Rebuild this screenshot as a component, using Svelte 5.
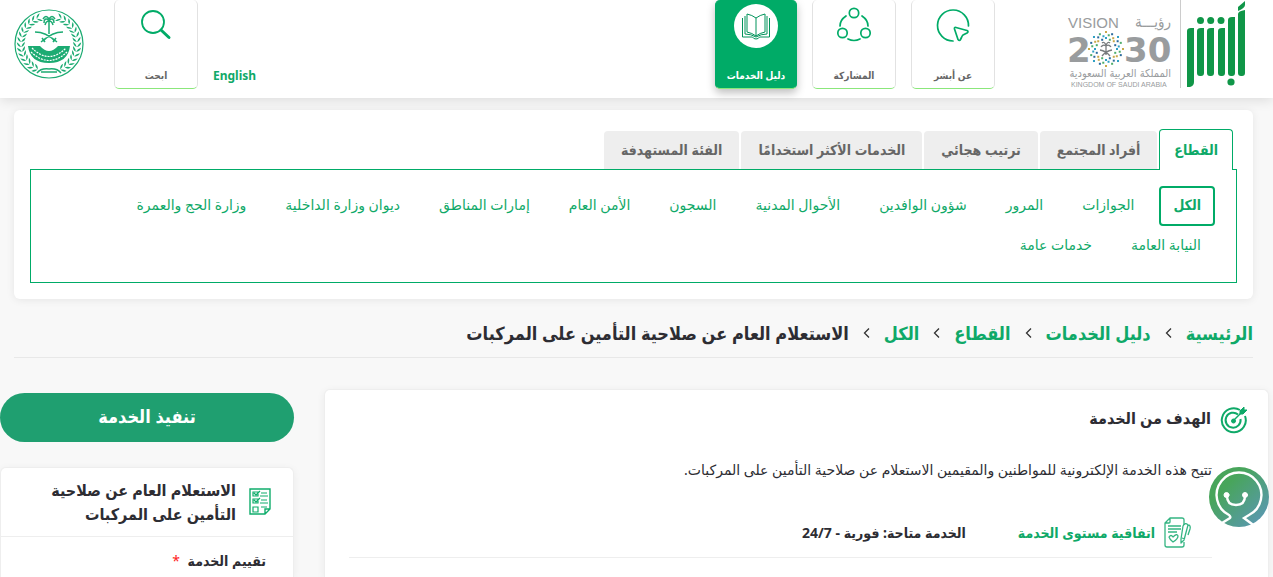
<script>
  const tabs = ['القطاع', 'أفراد المجتمع', 'ترتيب هجائي', 'الخدمات الأكثر استخدامًا', 'الفئة المستهدفة'];
  const sectors = [
    'الكل', 'الجوازات', 'المرور', 'شؤون الوافدين', 'الأحوال المدنية', 'السجون', 'الأمن العام',
    'إمارات المناطق', 'ديوان وزارة الداخلية', 'وزارة الحج والعمرة', 'النيابة العامة', 'خدمات عامة'
  ];
  const crumbs = ['الرئيسية', 'دليل الخدمات', 'القطاع', 'الكل'];
  const service = 'الاستعلام العام عن صلاحية التأمين على المركبات';
  let activeTab = $state(0);
  let activeSector = $state(0);

  // Leaves of one wreath branch, placed along an arc around the emblem's centre.
  const leaves = Array.from({ length: 14 }, (_, i) => {
    const deg = 66 - i * 10;
    const a = (deg * Math.PI) / 180;
    return { x: 35 + 28 * Math.cos(a), y: 35 - 28 * Math.sin(a), r: -deg };
  });

  // Dots of the snowflake-like rosette in the Vision mark.
  const colours = ['#2f9fc4', '#4fae6a', '#c9a94a', '#2b6a9c'];
  const dots = [10, 13, 16].flatMap((radius, ring) =>
    Array.from({ length: 16 }, (_, i) => {
      const a = ((i + (ring % 2) / 2) * Math.PI) / 8;
      const d = radius + (i % 2 ? 0 : 1);
      return { x: 39 + d * Math.cos(a), y: 39 + d * Math.sin(a), c: colours[(i + ring) % 4] };
    })
  );
</script>

<div class="page" dir="rtl" lang="ar">
  <header>
    <a class="logo absher" href="#home" aria-label="أبشر">
      <svg width="60" height="88" viewBox="0 0 60 88" fill="#109648">
        <path d="M2 31q0-3 4-3h3v54q0 4-4 5H2zM12 31q0-3 4-3h3v45q0 3-3 3h-1q-3 0-3-3zM22 31q0-3 4-3h3v45q0 3-3 3h-1q-3 0-3-3zM33 31q0-3 4-3h3v45q0 3-3 3h-1q-3 0-3-3zM43 20q0-3 4-3h3v56q0 3-3 3h-1q-3 0-3-3zM53 14q0-3 7-4v63q0 3-3 3h-1q-3 0-3-3z" />
        <path d="M53 11V7l7-6v4q0 3-7 6z" />
        <circle cx="15.500" cy="20.500" r="3.500" /><circle cx="25.700" cy="20.500" r="3.500" /><circle cx="36" cy="20.500" r="3.500" />
        <circle cx="46" cy="82" r="3.600" />
      </svg>
    </a>
    <a class="logo vision" href="#vision" aria-label="VISION 2030">
      <svg width="108" height="80" viewBox="0 0 108 80" fill="#999c9e" direction="ltr">
        <text x="1" y="18" font-size="15">VISION</text>
        <text class="ar" x="104" y="17" font-size="15" direction="rtl">رؤيـــة</text>
        <text class="num" x="0" y="52" font-size="34">2</text>
        <text class="num" x="57" y="52" font-size="34">30</text>
        {#each dots as d}<rect x={d.x - 1} y={d.y - 1} width="2" height="2" fill={d.c} />{/each}
        <path d="M39 45v-9M39 36q-3-2-5 1M39 36q3-2 5 1M39 35q-2-4-4-2M39 35q2-4 4-2M33 40q6 1 10 6M45 40q-6 1-10 6" fill="none" stroke="#777b7d" stroke-width="1.300" />
        <text class="ar" x="104" y="67" font-size="11" direction="rtl">المملكة العربية السعودية</text>
        <text x="4" y="77" font-size="7">KINGDOM OF SAUDI ARABIA</text>
      </svg>
    </a>
    <nav class="tiles" aria-label="القائمة الرئيسية">
      <a class="tile" href="#about">
        <svg width="40" height="40" viewBox="0 0 40 40" fill="none" stroke="#00ab67" stroke-width="1.700" stroke-linecap="round" stroke-linejoin="round">
          <path d="M20 36A15.500 15.500 0 1 1 35.500 21" />
          <path d="M21.500 24q-.5-2 1.500-1.500l11 3q2 1 0 2.500l-4 2q-1 1-1.500 2.500l-1 2q-1 2-2.500 0z" />
        </svg>
        <span>عن أبشر</span>
      </a>
      <a class="tile" href="#participate">
        <svg width="40" height="40" viewBox="0 0 40 40" fill="none" stroke="#00ab67" stroke-width="1.700" stroke-linecap="round">
          <circle cx="20" cy="8" r="4.700" /><circle cx="8.500" cy="28" r="4.700" /><circle cx="31.500" cy="28" r="4.700" />
          <path d="M12 11q-6 4-6 10M28 11q6 4 6 10M14 34q6 3 12 0" />
        </svg>
        <span>المشاركة</span>
      </a>
      <a class="tile current" href="#directory" aria-current="page">
        <svg width="44" height="44" viewBox="0 0 44 44" fill="none" stroke="#00935a" stroke-width="1">
          <circle cx="22" cy="22" r="22" fill="#fff" stroke="none" />
          <path d="M22 14q-4-3-9-4v18q5 1 9 4 4-3 9-4V10q-5 1-9 4zM22 14v18M11 12v18q6 0 11 3 5-3 11-3V12M8.500 14v19h10q1 2 3.500 2t3.500-2h10V14" />
        </svg>
        <span>دليل الخدمات</span>
      </a>
    </nav>
    <div class="tools">
      <a class="lang" href="#en" lang="en">English</a>
      <button class="tile" type="button">
        <svg width="40" height="40" viewBox="0 0 40 40" fill="none" stroke="#00ab67" stroke-linecap="round">
          <circle cx="17" cy="17" r="11" stroke-width="1.800" />
          <path d="M25 25l8 7.500" stroke-width="3" />
        </svg>
        <span>ابحث</span>
      </button>
      <a class="emblem" href="#moi" aria-label="وزارة الداخلية">
        <svg width="70" height="70" viewBox="0 0 70 70" fill="none" stroke="#1cab72">
          <circle cx="35" cy="35" r="34" stroke-width="1.200" />
          {#each [1, -1] as side}
            <g transform={side === 1 ? undefined : 'translate(70 0) scale(-1 1)'}>
              {#each leaves as l}
                <g transform={`translate(${l.x} ${l.y}) rotate(${l.r})`} fill="#1cab72" stroke="none">
                  <path d="M0 1q1-3 4-5 0 4-4 5zM0 1q-1-3-4-5 0 4 4 5z" />
                </g>
              {/each}
              <path d="M35 60q8-1 12 4M35 63h8" stroke-width="1.500" />
            </g>
          {/each}
          <path d="M35 25v-14M35 11q-5-3-5 3M35 11q5-3 5 3M35 10q-3-5-6 0M35 10q3-5 6 0M35 12q-3 0-4 4M35 12q3 0 4 4" stroke-width="1.500" />
          <path d="M21 23q11 0 20 9M49 23q-11 0-20 9M27 33l5-4M43 33l-5-4M28 29l3 4M42 29l-3 4" stroke-width="1.500" />
          <path d="M14 37h12q9 10 18 0h12q-2 17-21 17T14 37z" fill="#1cab72" stroke="none" />
          <path d="M18 39q17 17 34 0M17 43q18 17 36 0" stroke="#fff" stroke-width="1.200" stroke-dasharray="2 1" />
        </svg>
      </a>
    </div>
  </header>

  <section class="filter">
    <div class="tabs" role="tablist">
      {#each tabs as tab, i}
        <button type="button" role="tab" aria-selected={activeTab === i} class:active={activeTab === i} onclick={() => (activeTab = i)}>{tab}</button>
      {/each}
    </div>
    <div class="sectors">
      {#each sectors as sector, i}
        <a href="#sector" class:active={activeSector === i} onclick={() => (activeSector = i)}>{sector}</a>
      {/each}
    </div>
  </section>

  <nav class="crumbs" aria-label="مسار التنقل">
    {#each crumbs as crumb}
      <a href="#crumb">{crumb}</a>
      <svg width="7" height="12" viewBox="0 0 7 12" fill="none" stroke="#333" stroke-width="1.300"><path d="M6 1.500L1.500 6 6 10.500" /></svg>
    {/each}
    <span>{service}</span>
  </nav>

  <div class="columns">
    <main>
      <div class="heading">
        <svg width="28" height="28" viewBox="0 0 28 28" fill="none" stroke="#0fa968" stroke-width="2">
          <path d="M20 4A12 12 0 1 0 25 10" /><path d="M18 8.500A7.500 7.500 0 1 0 20.500 13" />
          <circle cx="13.500" cy="15" r="2" fill="#0fa968" stroke-width="1" />
          <path d="M14 14l8-8" stroke-width="1.500" /><path d="M20 5l4-4v3h3l-4 4h-3z" fill="#0fa968" stroke-width="1" />
        </svg>
        <h2>الهدف من الخدمة</h2>
      </div>
      <div class="body">
        <p>تتيح هذه الخدمة الإلكترونية للمواطنين والمقيمين الاستعلام عن صلاحية التأمين على المركبات.</p>
        <div class="sla">
          <a href="#sla">
            <svg width="28" height="32" viewBox="0 0 28 32" fill="none" stroke="#35b583" stroke-width="1.300" stroke-linejoin="round">
              <path d="M20 8V3q0-2-2-2H6L1 6v22q0 2 2 2h15q2 0 2-2v-3M1 6h4q1 0 1-1V1M4 9h13M4 12h13M4 15h9" />
              <path d="M19 9q2-4 5-1l-4 15-3 3v-4zM18 21l3 1M24 8q3 0 2 4l-2 6" />
              <path d="M5 20q2-3 4 0 4-4 5-1 0 3-5 6-3-2-4-5z" />
            </svg>
            اتفاقية مستوى الخدمة
          </a>
          <strong>الخدمة متاحة: فورية - 24/7</strong>
        </div>
      </div>
    </main>
    <aside>
      <button class="start" type="button">تنفيذ الخدمة</button>
      <div class="card">
        <div class="card-title">
          <svg width="23" height="28" viewBox="0 0 23 28" fill="none" stroke="#10ad6c" stroke-width="1.400">
            <path d="M1 1h20v20l-5 5H1zM21 21h-5v5" />
            <path d="M4 4h5v4H4zM4 11h5v4H4zM4 19h5v5H4zM5 5l2 2 4-4M5 12l2 2 4-4" stroke-width="1.200" />
            <path d="M12 5h6M11 8h8M12 12h6M11 15h8M12 19h6" stroke-width="1" />
          </svg>
          <h3>{service}</h3>
        </div>
        <div class="rating">تقييم الخدمة <span>*</span></div>
      </div>
    </aside>
  </div>

  <button class="chat" type="button" aria-label="المساعد">
    <svg width="60" height="60" viewBox="0 0 60 60" fill="none" stroke="#fff" stroke-width="2.400" stroke-linecap="round">
      <defs>
        <linearGradient id="chat-fill" x1="0" y1="0" x2="1" y2="1">
          <stop offset=".3" stop-color="#48a55b" /><stop offset=".9" stop-color="#5a98b0" />
        </linearGradient>
      </defs>
      <circle cx="30" cy="30" r="30" fill="url(#chat-fill)" stroke="none" />
      <path d="M13 56l8-5q1-1-1-3A22.400 22.400 0 1 1 40 48l-5 3 8 6" />
      <path d="M18 29q0 9 9 9 9 0 9-9" />
      <circle cx="17.500" cy="28" r="2.500" fill="#fff" stroke-width="1" /><circle cx="36" cy="28" r="2.500" fill="#fff" stroke-width="1" />
    </svg>
  </button>
</div>

<style>
  :global(body) { margin: 0; background: #f8f8f8; }
  .page {
    min-height: 100vh; display: flex; flex-direction: column; box-sizing: border-box;
    font-family: "Noto Sans", "DejaVu Sans", sans-serif; color: #2d2d33; overflow: hidden;
  }
  a { text-decoration: none; color: #0fa968; }
  button { font: inherit; cursor: pointer; }
  svg { display: block; flex: none; }
  h2, h3, p { margin: 0; }
  .tile, .tabs, .sectors .active, .crumbs, h2, h3, .sla, .start, .rating {
    font-family: "Noto Sans", "DejaVu Sans Condensed", "DejaVu Sans", sans-serif;
  }

  header {
    display: flex; height: 98px; padding: 0 28px 0 14px; background: #fff;
    box-shadow: 0 2px 12px rgba(0, 0, 0, .12);
  }
  .absher { padding-left: 4px; border-left: 1px solid #ccc; height: 88px; }
  .vision { margin: 10px 5px 0 72px; }
  .vision text { font-family: "Liberation Sans", sans-serif; }
  .vision .num { font-family: "DejaVu Sans", sans-serif; font-weight: 700; }
  .vision .ar { font-family: "DejaVu Sans Condensed", "DejaVu Sans", sans-serif; }
  .tiles { display: flex; gap: 15px; }
  .tile {
    display: flex; flex-direction: column; align-items: center; justify-content: space-between;
    box-sizing: border-box; width: 84px; height: 89px; padding: 5px 0 5px;
    background: #fff; border: 1px solid #e2e2e2; border-top: 0; border-bottom: 1px solid #8be77b; border-radius: 5px;
    color: #666; font-size: 10px; font-weight: 700; line-height: 16px;
  }
  .current { width: 82px; padding-top: 4px; background: #00ab67; color: #fff; border-color: #00ab67 #00ab67 #8be77b; box-shadow: 0 4px 8px rgba(0, 0, 0, .25); }
  .tools { display: flex; margin-right: auto; }
  .lang { font-size: 12px; font-weight: 700; line-height: 20px; margin: 66px 0 0 15px; }
  .emblem { margin: 9px 30px 0 0; }

  .filter {
    margin: 12px 20px 0 14px; padding: 19px 16px 16px; background: #fff; border-radius: 6px;
    box-shadow: 0 1px 8px rgba(0, 0, 0, .08);
  }
  .tabs { display: flex; align-items: flex-end; gap: 2px; padding-right: 4px; }
  .tabs button {
    height: 38px; padding: 0 17px 2px; border: 0; border-radius: 4px 4px 0 0; background: #eee; color: #666;
    font-size: 14px; font-weight: 700; white-space: nowrap;
  }
  .tabs .active {
    position: relative; height: 41px; margin-bottom: -1px; padding: 0 14px 2px; background: #fff; color: #0fa968;
    border: 1px solid #00ab67; border-bottom: 0;
  }
  .sectors {
    display: flex; flex-wrap: wrap; align-content: flex-start; gap: 0 11px; padding: 16px 21px; min-height: 80px;
    border: 1px solid #00ab67;
  }
  .sectors a {
    box-sizing: border-box; height: 40px; padding: 0 12px; border: 2px solid transparent; border-radius: 4px;
    font-size: 14px; line-height: 34px; white-space: nowrap;
  }
  .sectors .active { border-color: #00ab67; font-weight: 700; }

  .crumbs {
    display: flex; align-items: center; gap: 14px; height: 48px; margin: 10px 20px 0 14px;
    border-bottom: 1px solid #e8e8e8; font-size: 18px; font-weight: 700; white-space: nowrap;
  }

  .columns { flex: 1; display: grid; grid-template-columns: minmax(0, 1fr) 294px; gap: 30px; margin: 31px 4px 0 0; }
  main, .card { background: #fff; border: 1px solid #eee; border-bottom: 0; border-radius: 6px 6px 0 0; box-shadow: 0 2px 8px rgba(0, 0, 0, .06); }
  main { padding: 16px 20px 0 24px; }
  .heading { display: flex; gap: 9px; }
  h2 { font-size: 16px; line-height: 24px; }
  .body { padding-right: 36px; }
  p { margin-top: 24px; font-size: 14px; line-height: 24px; }
  .sla { display: flex; align-items: center; gap: 52px; padding: 35px 20px 8px 0; border-bottom: 1px solid #eee; font-size: 14px; line-height: 24px; }
  .sla a { display: flex; align-items: center; gap: 9px; font-weight: 700; }

  aside { display: flex; flex-direction: column; gap: 25px; padding-top: 4px; }
  .start { height: 49px; padding: 0 0 3px; border: 0; border-radius: 25px; background: #1f9f70; color: #fff; font-size: 18px; font-weight: 700; }
  .card { flex: 1; }
  .card-title { display: flex; align-items: center; gap: 13px; padding: 10px 21px; border-bottom: 1px solid #eee; }
  h3 { font-size: 16px; line-height: 24px; }
  .rating { padding: 12px 27px 4px; font-size: 14px; font-weight: 700; line-height: 24px; }
  .rating span { color: #f22; font-weight: 400; margin-right: 4px; }

  .chat { position: fixed; right: 4px; bottom: 50px; padding: 0; border: 0; background: none; border-radius: 30px; }
</style>
